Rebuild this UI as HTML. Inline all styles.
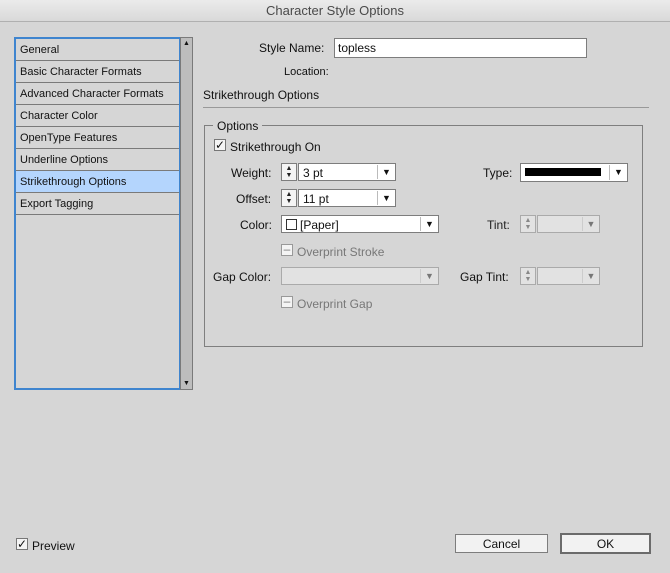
<!DOCTYPE html>
<html><head><style>
*{box-sizing:border-box;margin:0;padding:0}
body{width:670px;height:573px;background:#d6d6d6;font-family:"Liberation Sans",Arial,sans-serif;font-size:12px;color:#111;position:relative;overflow:hidden}
.a{position:absolute;white-space:nowrap}
.title{left:0;top:0;width:670px;height:22px;background:linear-gradient(#ebebeb,#d9d9d9);border-bottom:1px solid #b0b0b0;text-align:center;line-height:22px;font-size:13px;color:#4a4a4a}
.list{left:14px;top:37px;width:167px;height:353px;border:2px solid #3f85cf;background:#d6d6d6}
.row{height:22px;line-height:22px;border-bottom:1px solid #7a7a7a;padding-left:4px;font-size:11px;color:#111}
.sel{background:#b4d5fd}
.sb{left:180px;top:37px;width:13px;height:353px;background:#bdbdbd;border:1px solid #7a7a7a}
.in{background:#fff;border:1px solid #7d7d7d}
.dis{background:#e2e2e2;border:1px solid #aaa}
.spin{border:1px solid #7d7d7d;background:#f4f4f4;font-size:7px;line-height:7px;text-align:center;color:#222;padding-top:1px}
.dd{border-left:1px solid #bbb;font-size:9px;line-height:14px;text-align:center}
.cb{width:12px;height:12px;border:1px solid #777;background:#f4f4f4;font-size:12px;line-height:10px;text-align:center}
.gray{color:#777}
.btn{background:#f2f2f2;border:1px solid #7d7d7d;text-align:center;font-size:12px}
</style></head><body>
<div class="a title">Character Style Options</div>
<div class="a list">
<div class="row">General</div>
<div class="row">Basic Character Formats</div>
<div class="row">Advanced Character Formats</div>
<div class="row">Character Color</div>
<div class="row">OpenType Features</div>
<div class="row">Underline Options</div>
<div class="row sel">Strikethrough Options</div>
<div class="row">Export Tagging</div>
</div>
<div class="a sb"><div style="font-size:7px;text-align:center;margin-top:2px">▲</div><div style="position:absolute;bottom:2px;width:11px;font-size:7px;text-align:center">▼</div></div>

<div class="a" style="left:259px;top:41px">Style Name:</div>
<div class="a in" style="left:334px;top:38px;width:253px;height:20px;padding:2px 3px">topless</div>
<div class="a" style="left:284px;top:66px;font-size:11px">Location:</div>
<div class="a" style="left:203px;top:88px">Strikethrough Options</div>
<div class="a" style="left:203px;top:107px;width:446px;height:1px;background:#999"></div>

<div class="a" style="left:204px;top:125px;width:439px;height:222px;border:1px solid #7f7f7f"></div>
<div class="a" style="left:213px;top:119px;background:#d6d6d6;padding:0 4px">Options</div>

<div class="a cb" style="left:214px;top:139px">✓</div>
<div class="a" style="left:230px;top:140px">Strikethrough On</div>

<div class="a" style="left:231px;top:166px">Weight:</div>
<div class="a spin" style="left:281px;top:163px;width:16px;height:18px">▲<br>▼</div>
<div class="a in" style="left:298px;top:163px;width:98px;height:18px;padding:2px 4px">3 pt</div>
<div class="a dd" style="left:377px;top:165px;width:18px;height:14px">▼</div>

<div class="a" style="left:483px;top:166px">Type:</div>
<div class="a in" style="left:520px;top:163px;width:108px;height:19px"></div>
<div class="a" style="left:525px;top:168px;width:76px;height:8px;background:#000"></div>
<div class="a dd" style="left:609px;top:165px;width:18px;height:15px">▼</div>

<div class="a" style="left:236px;top:192px">Offset:</div>
<div class="a spin" style="left:281px;top:189px;width:16px;height:18px">▲<br>▼</div>
<div class="a in" style="left:298px;top:189px;width:98px;height:18px;padding:2px 4px">11 pt</div>
<div class="a dd" style="left:377px;top:191px;width:18px;height:14px">▼</div>

<div class="a" style="left:240px;top:218px">Color:</div>
<div class="a in" style="left:281px;top:215px;width:158px;height:18px;padding:2px 4px"><span style="display:inline-block;width:11px;height:11px;border:1px solid #333;vertical-align:-1px;margin-right:3px"></span>[Paper]</div>
<div class="a dd" style="left:420px;top:217px;width:18px;height:14px">▼</div>

<div class="a" style="left:487px;top:218px;color:#222">Tint:</div>
<div class="a spin" style="left:520px;top:215px;width:16px;height:18px;border-color:#aaa;color:#888;background:#e2e2e2">▲<br>▼</div>
<div class="a dis" style="left:537px;top:215px;width:63px;height:18px"></div>
<div class="a dd gray" style="left:582px;top:217px;width:17px;height:14px;border-color:#ccc">▼</div>

<div class="a cb" style="left:281px;top:244px;border-color:#999;line-height:8px;color:#777">–</div>
<div class="a gray" style="left:297px;top:245px">Overprint Stroke</div>

<div class="a" style="left:213px;top:270px">Gap Color:</div>
<div class="a dis" style="left:281px;top:267px;width:158px;height:18px"></div>
<div class="a dd gray" style="left:420px;top:269px;width:18px;height:14px;border-color:#ccc">▼</div>
<div class="a" style="left:460px;top:270px">Gap Tint:</div>
<div class="a spin" style="left:520px;top:267px;width:16px;height:18px;border-color:#aaa;color:#888;background:#e2e2e2">▲<br>▼</div>
<div class="a dis" style="left:537px;top:267px;width:63px;height:18px"></div>
<div class="a dd gray" style="left:582px;top:269px;width:17px;height:14px;border-color:#ccc">▼</div>

<div class="a cb" style="left:281px;top:296px;border-color:#999;line-height:8px;color:#777">–</div>
<div class="a gray" style="left:297px;top:297px">Overprint Gap</div>

<div class="a cb" style="left:16px;top:538px">✓</div>
<div class="a" style="left:32px;top:539px">Preview</div>
<div class="a btn" style="left:455px;top:534px;width:93px;height:19px;line-height:18px">Cancel</div>
<div class="a btn" style="left:560px;top:533px;width:91px;height:21px;line-height:18px;border:2px solid #6b6b6b">OK</div>
</body></html>
